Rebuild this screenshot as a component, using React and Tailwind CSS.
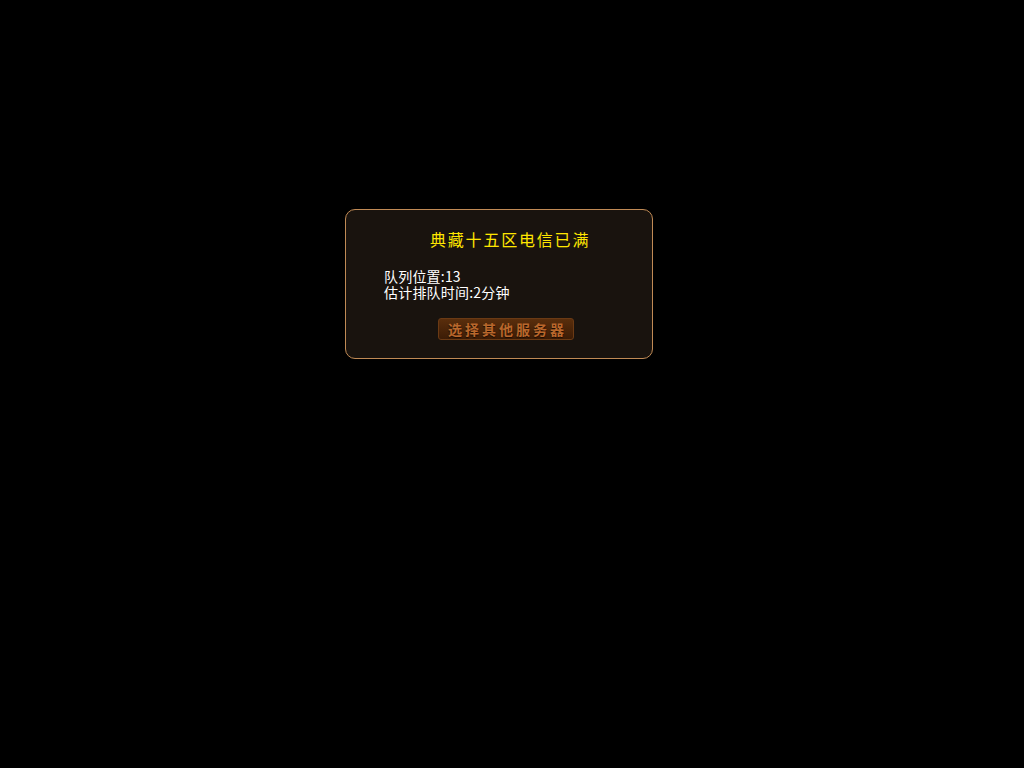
export default function App() {
  return (
    <div className="w-[1024px] h-[768px] bg-black" style={{ fontFamily: '"Noto Sans CJK SC", "Noto Sans", sans-serif' }}>
      <div className="pt-[209px] pl-[345px]">
        <div className="w-[308px] h-[150px] rounded-[10px] border border-[#c08a55] bg-[#19130e] flex flex-col">
          <div className="mt-[19px] pl-[84px] text-[16px] leading-[20px] text-[#ffe600] tracking-[1.8px]">典藏十五区电信已满</div>
          <div className="mt-[19px] pl-[38px] text-[14px] leading-[16px] text-white tracking-[0.2px] flex flex-col">
            <span className="block h-[16px]">队列位置:13</span>
            <span className="block h-[16px]">估计排队时间:2分钟</span>
          </div>
          <div className="mt-[18px] flex pl-[92px]">
            <div className="w-[136px] h-[22px] rounded-[3px] border border-[#6b3a14] bg-gradient-to-b from-[#5a2e0c] to-[#3c1c06] flex items-center justify-center text-[14px] leading-[14px] font-bold text-[#b8672c] tracking-[3px] pl-[3px] [text-shadow:0_1px_1px_#1a0a00]">
              选择其他服务器
            </div>
          </div>
        </div>
      </div>
    </div>
  );
}
